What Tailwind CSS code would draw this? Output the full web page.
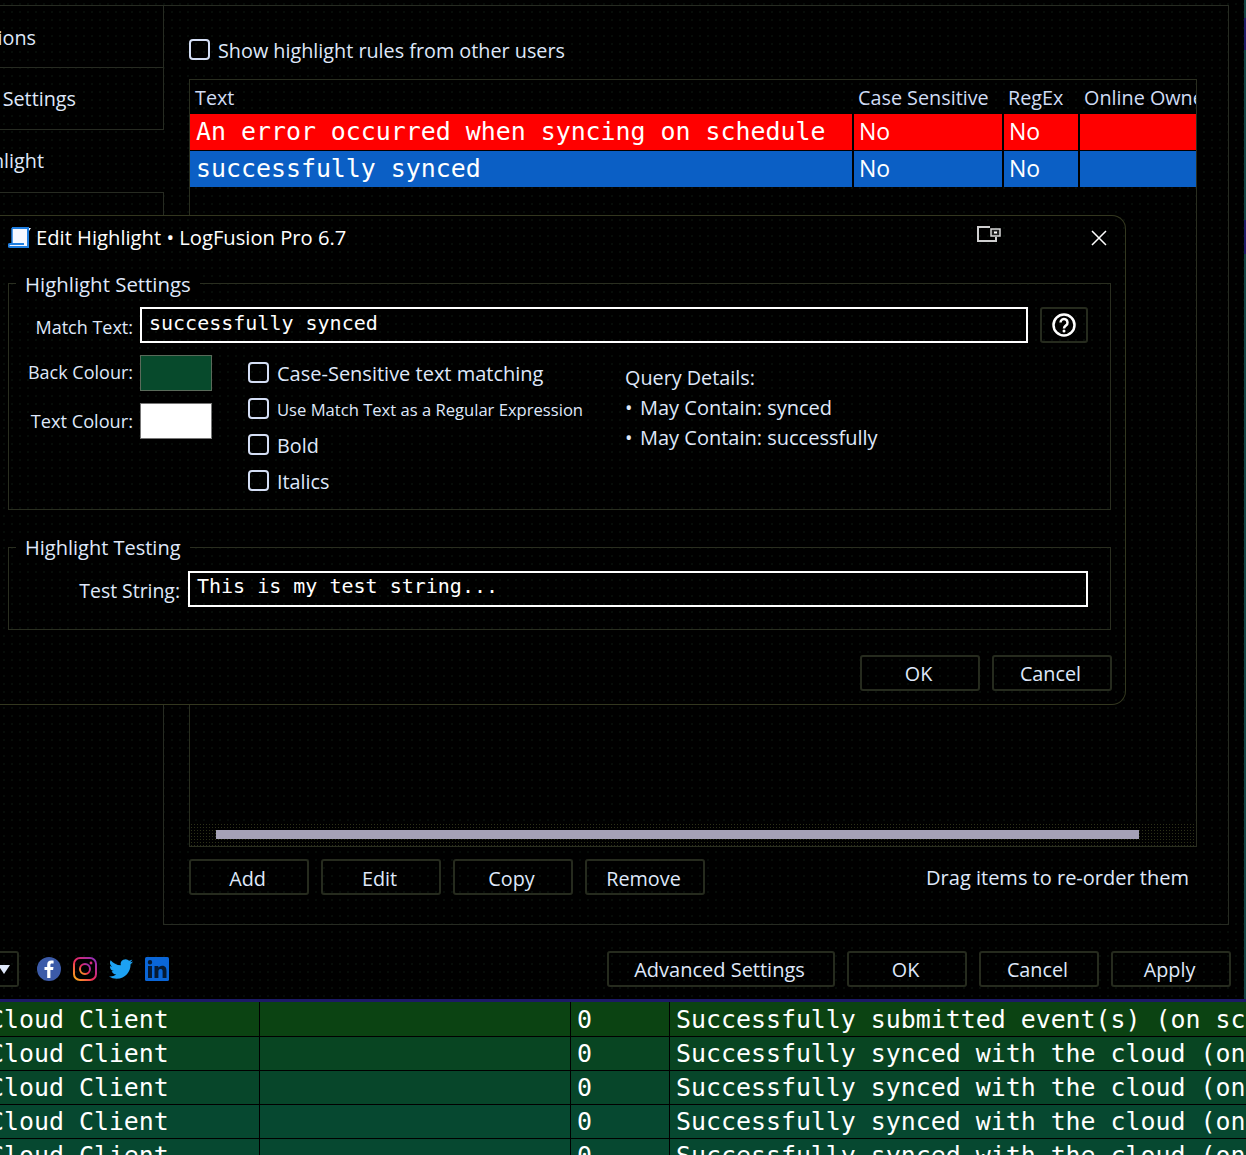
<!DOCTYPE html>
<html><head><meta charset="utf-8">
<script src="https://cdn.jsdelivr.net/npm/@tailwindcss/browser@4"></script>
</head>
<body class="bg-black">
<div class="relative w-[1246px] h-[1155px] bg-black overflow-hidden font-['Open_Sans',sans-serif] text-[19.8px] text-[#dfe8fa] flex flex-col">

  <!-- settings window -->
  <div class="h-[999px] w-[1244px] shrink-0 flex flex-col pt-[5px] bg-[radial-gradient(circle,#0f1a12_0.6px,transparent_0.8px)] bg-[size:8px_8px]">
    <div class="h-[920px] flex">
      <div class="w-[164px] shrink-0 flex flex-col border-t border-[#272b22] overflow-hidden">
        <div class="h-[62px] pt-[2px] flex items-center justify-end pr-[127px] whitespace-nowrap border-b border-r border-[#272b22]"><span class="shrink-0">Options</span></div>
        <div class="h-[62px] pt-[1px] flex items-center justify-end pr-[87px] whitespace-nowrap border-b border-r border-[#272b22]"><span class="shrink-0">Cloud Settings</span></div>
        <div class="h-[62px] flex items-center justify-end pr-[120px] whitespace-nowrap"><span class="shrink-0">Highlight</span></div>
        <div class="flex-1 border-t border-r border-[#272b22]"></div>
      </div>
      <div class="w-[1065px] border-t border-r border-b border-[#272b22] pl-[25px] pr-[31px] flex flex-col">
        <label class="h-[73px] flex items-center gap-[8px] pt-[13px] shrink-0">
          <span class="w-[21px] h-[21px] rounded-[4px] border-2 border-[#d4def5]"></span><span class="pt-[3px]">Show highlight rules from other users</span>
        </label>
        <div class="h-[768px] shrink-0 border border-[#2a2e20] flex flex-col">
          <div class="h-[34px] shrink-0 flex items-center pt-[2px] text-[#cfdcf5] whitespace-nowrap overflow-hidden">
            <div class="w-[664px] pl-[5px] shrink-0">Text</div>
            <div class="w-[150px] pl-[4px] shrink-0">Case Sensitive</div>
            <div class="w-[76px] pl-[4px] shrink-0">RegEx</div>
            <div class="pl-[4px] shrink-0">Online Owner</div>
          </div>
          <div class="h-[36px] shrink-0 flex bg-[#ff0000] text-white font-['DejaVu_Sans_Mono',monospace] text-[24.9px]">
            <div class="w-[664px] border-r-2 border-black pl-[6px] leading-[35px] whitespace-nowrap">An error occurred when syncing on schedule</div>
            <div class="w-[150px] border-r-2 border-black pl-[5px] leading-[34px] text-[23px] font-['Open_Sans',sans-serif]">No</div>
            <div class="w-[76px] border-r-2 border-black pl-[5px] leading-[34px] text-[23px] font-['Open_Sans',sans-serif]">No</div>
            <div class="flex-1"></div>
          </div>
          <div class="h-[37px] shrink-0 flex bg-[#0b5fc5] text-white border-t border-black font-['DejaVu_Sans_Mono',monospace] text-[24.9px]">
            <div class="w-[664px] border-r-2 border-black pl-[6px] leading-[35px] whitespace-nowrap">successfully synced</div>
            <div class="w-[150px] border-r-2 border-black pl-[5px] leading-[34px] text-[23px] font-['Open_Sans',sans-serif]">No</div>
            <div class="w-[76px] border-r-2 border-black pl-[5px] leading-[34px] text-[23px] font-['Open_Sans',sans-serif]">No</div>
            <div class="flex-1"></div>
          </div>
          <div class="flex-1"></div>
          <div class="h-[23px] shrink-0 bg-[radial-gradient(circle,#2c3018_0.7px,#000_0.9px)] bg-[size:3px_3px] pl-[26px] pr-[57px] pt-[7px]">
            <div class="h-[9px] bg-[#a5a1b6]"></div>
          </div>
        </div>
        <div class="flex items-center gap-[12px] mt-[12px]">
          <button class="w-[120px] h-[36px] pt-[3px] pr-[3px] rounded-[3px] border-2 border-[#262b1e]">Add</button>
          <button class="w-[120px] h-[36px] pt-[3px] pr-[3px] rounded-[3px] border-2 border-[#262b1e]">Edit</button>
          <button class="w-[120px] h-[36px] pt-[3px] pr-[3px] rounded-[3px] border-2 border-[#262b1e]">Copy</button>
          <button class="w-[120px] h-[36px] pt-[3px] pr-[3px] rounded-[3px] border-2 border-[#262b1e]">Remove</button>
          <span class="ml-auto pr-[8px] pt-[2px] text-[20px]">Drag items to re-order them</span>
        </div>
      </div>
    </div>
    <div class="flex items-center h-[36px] mt-[26px] pr-[13px]">
      <div class="w-[19px] h-[36px] rounded-r-[3px] border-2 border-l-0 border-[#262b1e] flex items-center"><div class="w-0 h-0 border-x-[6px] border-x-transparent border-t-[9px] border-t-[#dfe8fa] -ml-[2px]"></div></div>
      <div class="flex gap-[12px] ml-[18px]">
        <svg width="24" height="24" viewBox="0 0 24 24"><circle cx="12" cy="12" r="12" fill="#3b5aa8"/><path d="M13.4 21v-8h2.7l.4-3.1h-3.1V8c0-.9.3-1.5 1.5-1.5h1.7V3.700c-.3 0-1.300-.1-2.400-.1-2.400 0-4 1.400-4 4.100v2.200H7.500V13h2.700v8z" fill="#fff"/></svg>
        <svg width="24" height="24" viewBox="0 0 24 24"><defs><linearGradient id="ig" x1="0" y1="1" x2="1" y2="0"><stop offset="0" stop-color="#fdb515"/><stop offset=".45" stop-color="#ee2a5b"/><stop offset="1" stop-color="#8a2fc0"/></linearGradient></defs><rect x="1" y="1" width="22" height="22" rx="6" fill="none" stroke="url(#ig)" stroke-width="2"/><circle cx="12" cy="12" r="5" fill="none" stroke="url(#ig)" stroke-width="2"/><circle cx="18" cy="6" r="1.400" fill="#d6297f"/></svg>
        <svg width="24" height="24" viewBox="0 0 24 24"><path fill="#1da1f2" d="M23.950 4.570a10 10 0 0 1-2.820.77 4.960 4.960 0 0 0 2.160-2.720c-.95.550-2 .96-3.130 1.190a4.920 4.920 0 0 0-8.380 4.480C7.690 8.100 4.070 6.130 1.640 3.160a4.820 4.820 0 0 0-.66 2.470c0 1.710.87 3.210 2.190 4.100a4.900 4.900 0 0 1-2.230-.62v.06a4.920 4.920 0 0 0 3.950 4.830c-.72.190-1.480.22-2.220.08a4.940 4.940 0 0 0 4.600 3.420A9.870 9.870 0 0 1 0 19.540a14 14 0 0 0 7.560 2.210c9.050 0 14-7.500 14-13.980 0-.21 0-.42-.02-.63a9.940 9.940 0 0 0 2.460-2.550z"/></svg>
        <svg width="24" height="24" viewBox="0 0 24 24"><rect width="24" height="24" rx="1.500" fill="#0a66d8"/><path fill="#061a33" d="M3 9h4v12H3zM5 3a2.200 2.200 0 1 1 0 4.400A2.200 2.200 0 0 1 5 3zM9.500 9h3.800v1.700c.6-1 1.900-2 3.800-2 3.700 0 4.400 2.400 4.400 5.600V21h-3.900v-5.900c0-1.400 0-3.200-2-3.200s-2.200 1.500-2.200 3.100v6H9.500z"/></svg>
      </div>
      <div class="ml-auto flex gap-[12px]">
        <button class="w-[228px] h-[36px] pt-[2px] pr-[3px] rounded-[3px] border-2 border-[#262b1e] text-[20px]">Advanced Settings</button>
        <button class="w-[120px] h-[36px] pt-[2px] pr-[3px] rounded-[3px] border-2 border-[#262b1e]">OK</button>
        <button class="w-[120px] h-[36px] pt-[2px] pr-[3px] rounded-[3px] border-2 border-[#262b1e]">Cancel</button>
        <button class="w-[120px] h-[36px] pt-[2px] pr-[3px] rounded-[3px] border-2 border-[#262b1e]">Apply</button>
      </div>
    </div>
  </div>
  <div class="h-[3px] w-[1246px] bg-[#1c1a66] shrink-0"></div>

  <!-- log rows -->
  <div class="flex-1 flex flex-col font-['DejaVu_Sans_Mono',monospace] text-[24.9px] text-white leading-[33px] whitespace-nowrap overflow-hidden">
    <div class="h-[35px] leading-[35px] shrink-0 flex border-b border-black bg-[#0b4312]"><div class="w-[260px] shrink-0 border-r border-black -indent-[11px]">Cloud Client</div><div class="w-[311px] shrink-0 border-r border-black"></div><div class="w-[99px] pl-[6px] shrink-0 border-r border-black">0</div><div class="pl-[6px]">Successfully submitted event(s) (on schedule)</div></div>
    <div class="h-[34px] shrink-0 flex border-b border-black bg-[#084522]"><div class="w-[260px] shrink-0 border-r border-black -indent-[11px]">Cloud Client</div><div class="w-[311px] shrink-0 border-r border-black"></div><div class="w-[99px] pl-[6px] shrink-0 border-r border-black">0</div><div class="pl-[6px]">Successfully synced with the cloud (on schedule)</div></div>
    <div class="h-[34px] shrink-0 flex border-b border-black bg-[#07462a]"><div class="w-[260px] shrink-0 border-r border-black -indent-[11px]">Cloud Client</div><div class="w-[311px] shrink-0 border-r border-black"></div><div class="w-[99px] pl-[6px] shrink-0 border-r border-black">0</div><div class="pl-[6px]">Successfully synced with the cloud (on schedule)</div></div>
    <div class="h-[34px] shrink-0 flex border-b border-black bg-[#064830]"><div class="w-[260px] shrink-0 border-r border-black -indent-[11px]">Cloud Client</div><div class="w-[311px] shrink-0 border-r border-black"></div><div class="w-[99px] pl-[6px] shrink-0 border-r border-black">0</div><div class="pl-[6px]">Successfully synced with the cloud (on schedule)</div></div>
    <div class="h-[34px] shrink-0 flex border-b border-black bg-[#064830]"><div class="w-[260px] shrink-0 border-r border-black -indent-[11px]">Cloud Client</div><div class="w-[311px] shrink-0 border-r border-black"></div><div class="w-[99px] pl-[6px] shrink-0 border-r border-black">0</div><div class="pl-[6px]">Successfully synced with the cloud (on schedule)</div></div>
  </div>

  <!-- right edge strip of the window behind -->
  <div class="absolute right-0 top-0 w-[2px] h-[999px] bg-[#134444]">
    <div class="mt-[18px] h-[32px] bg-[#1c1a66]"></div>
    <div class="mt-[170px] h-[34px] bg-[#1c1a66]"></div>
  </div>

  <!-- dialog -->
  <div class="absolute left-0 top-[215px] w-[1126px] h-[490px] bg-black border border-l-0 border-[#33371f] rounded-r-[14px] flex flex-col bg-[radial-gradient(circle,#0f1a12_0.6px,transparent_0.8px)] bg-[size:8px_8px]">
    <div class="h-[44px] shrink-0 flex items-center pl-[8px] relative">
      <svg width="24" height="24" viewBox="0 0 24 24" class="mr-[4px]"><path d="M4 2h19l-2 3h-1v16H1l0-3h3z" fill="#f5f7ff"/><path d="M4 2h17M20 2v19H2a1.500 1.500 0 0 1 0-3h14" fill="none" stroke="#1f7ee0" stroke-width="2"/><path d="M4 2v15" stroke="#1f7ee0" stroke-width="1.500"/></svg>
      <span class="text-white text-[20.2px] pb-[2px]">Edit Highlight • LogFusion Pro 6.7</span>
      <svg width="26" height="18" viewBox="0 0 26 18" class="absolute left-[976px] top-[9px]"><path d="M14 2H2v14h18v-4" fill="none" stroke="#cfcfcf" stroke-width="2"/><rect x="15" y="4" width="9" height="7" fill="#222" stroke="#d8d8d8" stroke-width="1.500"/><rect x="18" y="6.500" width="3" height="2" fill="#fff"/></svg>
      <svg width="16" height="16" viewBox="0 0 16 16" class="absolute left-[1091px] top-[14px]"><path d="M1 1l14 14M15 1L1 15" stroke="#fff" stroke-width="1.500"/></svg>
    </div>
    <div class="relative ml-[8px] w-[1103px] h-[227px] mt-[23px] shrink-0 border border-[#2a2e20] flex">
      <span class="absolute left-[7px] -top-[14px] bg-black px-[9px] text-[20.4px] leading-[28px]">Highlight Settings</span>
      <div class="w-[1103px]">
        <div class="flex h-[36px] mt-[23px] items-center">
          <span class="w-[124px] text-right shrink-0 text-[18px] leading-[40px] mt-[3px]">Match Text:</span>
          <div class="ml-[7px] w-[888px] h-[36px] border-2 border-white font-['DejaVu_Sans_Mono',monospace] text-[20px] text-white pl-[7px] leading-[29px]">successfully synced</div>
          <button class="ml-[12px] w-[48px] h-[36px] rounded-[3px] border-2 border-[#262b1e] flex items-center justify-center">
            <svg width="24" height="24" viewBox="0 0 24 24"><circle cx="12" cy="12" r="10.500" fill="none" stroke="#fff" stroke-width="2.500"/><path d="M8.500 9.500a3.500 3.500 0 1 1 5.500 2.900c-1.300.9-2 1.500-2 3" fill="none" stroke="#fff" stroke-width="2.500"/><circle cx="12" cy="18" r="1.500" fill="#fff"/></svg>
          </button>
        </div>
        <div class="flex mt-[12px]">
          <div class="w-[203px] shrink-0 flex flex-col gap-[12px]">
            <div class="flex items-center h-[36px]"><span class="w-[124px] text-right text-[18px] pb-[1px]">Back Colour:</span><div class="ml-[7px] w-[72px] h-[36px] bg-[#074a2c] border border-[#5a6a5a]"></div></div>
            <div class="flex items-center h-[36px]"><span class="w-[124px] text-right text-[18.2px] pt-[1px]">Text Colour:</span><div class="ml-[7px] w-[72px] h-[36px] bg-white border border-[#777]"></div></div>
          </div>
          <div class="ml-[36px] w-[378px] shrink-0 flex flex-col gap-[15px] pt-[7px]">
            <div class="flex items-center h-[21px] gap-[8px] text-[20px]"><span class="w-[21px] h-[21px] shrink-0 rounded-[4px] border-2 border-[#d4def5]"></span><span class="pt-[3px]">Case-Sensitive text matching</span></div>
            <div class="flex items-center h-[21px] gap-[8px] text-[16.6px]"><span class="w-[21px] h-[21px] shrink-0 rounded-[4px] border-2 border-[#d4def5]"></span><span class="pt-[3px]">Use Match Text as a Regular Expression</span></div>
            <div class="flex items-center h-[21px] gap-[8px]"><span class="w-[21px] h-[21px] shrink-0 rounded-[4px] border-2 border-[#d4def5]"></span><span class="pt-[3px]">Bold</span></div>
            <div class="flex items-center h-[21px] gap-[8px]"><span class="w-[21px] h-[21px] shrink-0 rounded-[4px] border-2 border-[#d4def5]"></span><span class="pt-[3px]">Italics</span></div>
          </div>
          <div class="leading-[30px] pt-[8px] -ml-[1px]">
            <div>Query Details:</div>
            <div class="flex text-[20px]"><span class="w-[15px]">•</span>May Contain: synced</div>
            <div class="flex text-[20px]"><span class="w-[15px]">•</span>May Contain: successfully</div>
          </div>
        </div>
      </div>
    </div>
    <div class="relative ml-[8px] w-[1103px] h-[83px] mt-[37px] shrink-0 border border-[#2a2e20] flex items-start pt-[23px]">
      <span class="absolute left-[7px] -top-[14px] bg-black px-[9px] text-[20px] leading-[28px]">Highlight Testing</span>
      <span class="w-[171px] text-right text-[19.4px] leading-[40px]">Test String:</span>
      <div class="ml-[8px] w-[900px] h-[36px] border-2 border-white font-['DejaVu_Sans_Mono',monospace] text-[20px] text-white pl-[7px] leading-[27px]">This is my test string...</div>
    </div>
    <div class="flex justify-end gap-[12px] mt-[25px] pr-[13px]">
      <button class="w-[120px] h-[36px] pt-[2px] pr-[3px] rounded-[3px] border-2 border-[#262b1e]">OK</button>
      <button class="w-[120px] h-[36px] pt-[2px] pr-[3px] rounded-[3px] border-2 border-[#262b1e]">Cancel</button>
    </div>
  </div>
</div>
</body></html>
